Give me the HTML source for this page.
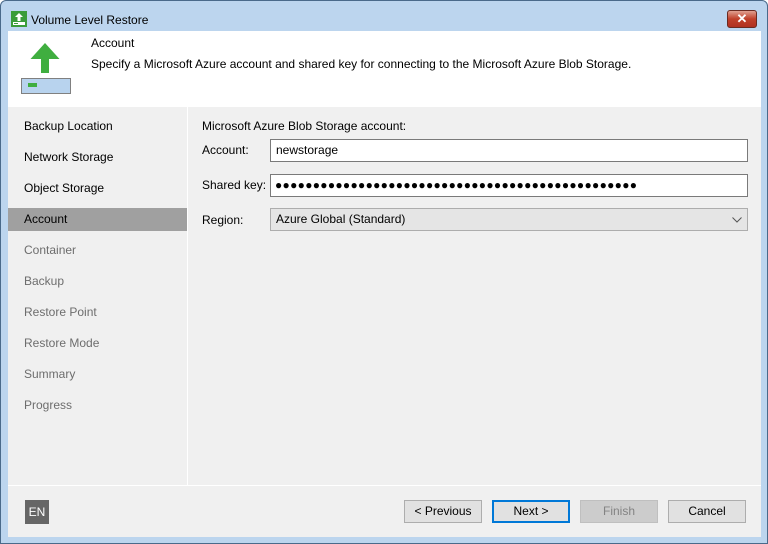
<!DOCTYPE html><html><head><style>
*{margin:0;padding:0;box-sizing:border-box}
body{width:768px;height:544px;overflow:hidden;font-family:"Liberation Sans",sans-serif;font-size:12px;color:#000;background:#fff}
.win{position:absolute;left:0;top:0;width:768px;height:544px;background:#bcd5ee;border:1px solid #4a6a8a;border-radius:6px 6px 0 0}
.title{position:absolute;left:30px;top:12px;font-size:12px;color:#000}
.close{position:absolute;left:726px;top:9px;width:30px;height:18px;background:linear-gradient(#e0a090,#c0402a 50%,#b03020);border:1px solid #6a2a20;border-radius:3px;color:#fff;font-weight:bold;text-align:center;line-height:16px;font-size:13px}
.client{position:absolute;left:7px;top:30px;width:753px;height:506px;background:#f0f0f0}
.hdr{position:absolute;left:0;top:0;width:753px;height:76px;background:#fff}
.nav div{position:absolute;left:0;width:179px;height:23px;line-height:23px;padding-left:16px;font-size:12px}
.dis{color:#6d6d6d}
.lbl{position:absolute;font-size:12px}
.inp{position:absolute;left:262px;width:478px;height:23px;border:1px solid #7a7a7a;background:#fff;padding-left:5px;line-height:21px}
.btn{position:absolute;top:469px;width:78px;height:23px;border:1px solid #adadad;background:#e1e1e1;text-align:center;line-height:21px;font-size:12px}
</style></head><body>
<div class="win">
<svg style="position:absolute;left:10px;top:10px" width="16" height="16"><rect x="0" y="0" width="16" height="16" fill="#3a9c3a"/><path d="M8 2 L4 6 H6.5 V10 H9.5 V6 H12 Z" fill="#fff"/><rect x="2" y="11" width="12" height="3" fill="#fff"/><rect x="3" y="12" width="4" height="1" fill="#3a9c3a"/></svg>
<div class="title">Volume Level Restore</div>
<div class="close">✕</div>
<div class="client">
<div class="hdr">
<svg style="position:absolute;left:0;top:0" width="80" height="76"><path d="M37 12 L22.5 28 H33 V42 H41 V28 H51.5 Z" fill="#3fae3f"/><rect x="13.5" y="47.5" width="49" height="15" fill="#b8d3ee" stroke="#808080"/><rect x="20" y="52" width="9" height="4" fill="#3fae3f"/></svg>
<div class="lbl" style="left:83px;top:5px">Account</div>
<div class="lbl" style="left:83px;top:26px">Specify a Microsoft Azure account and shared key for connecting to the Microsoft Azure Blob Storage.</div>
</div>
<div style="position:absolute;left:179px;top:76px;width:1px;height:378px;background:#fff"></div>
<div style="position:absolute;left:0;top:454px;width:753px;height:1px;background:#fff"></div>
<div class="nav">
<div style="top:84px">Backup Location</div>
<div style="top:115px">Network Storage</div>
<div style="top:146px">Object Storage</div>
<div style="top:177px;background:#a0a0a0">Account</div>
<div class="dis" style="top:208px">Container</div>
<div class="dis" style="top:239px">Backup</div>
<div class="dis" style="top:270px">Restore Point</div>
<div class="dis" style="top:301px">Restore Mode</div>
<div class="dis" style="top:332px">Summary</div>
<div class="dis" style="top:363px">Progress</div>
</div>
<div class="lbl" style="left:194px;top:88px">Microsoft Azure Blob Storage account:</div>
<div class="lbl" style="left:194px;top:112px">Account:</div>
<div class="inp" style="top:108px">newstorage</div>
<div class="lbl" style="left:194px;top:147px">Shared key:</div>
<div class="inp" style="top:143px;font-size:12px;letter-spacing:0.3px;padding-left:4px">●●●●●●●●●●●●●●●●●●●●●●●●●●●●●●●●●●●●●●●●●●●●●●●●</div>
<div class="lbl" style="left:194px;top:182px">Region:</div>
<div class="inp" style="top:177px;background:#e5e5e5;border-color:#adadad">Azure Global (Standard)<svg style="position:absolute;right:5px;top:8px" width="10" height="6"><path d="M0.5 0.5 L5 5 L9.5 0.5" fill="none" stroke="#555"/></svg></div>
<div style="position:absolute;left:17px;top:469px;width:24px;height:24px;background:#666;color:#fff;text-align:center;line-height:24px;font-size:12px">EN</div>
<div class="btn" style="left:396px">&lt; Previous</div>
<div class="btn" style="left:484px;border:2px solid #0078d7;line-height:19px">Next &gt;</div>
<div class="btn" style="left:572px;background:#ccc;border-color:#bfbfbf;color:#838383">Finish</div>
<div class="btn" style="left:660px">Cancel</div>
</div>
</div>
</body></html>
